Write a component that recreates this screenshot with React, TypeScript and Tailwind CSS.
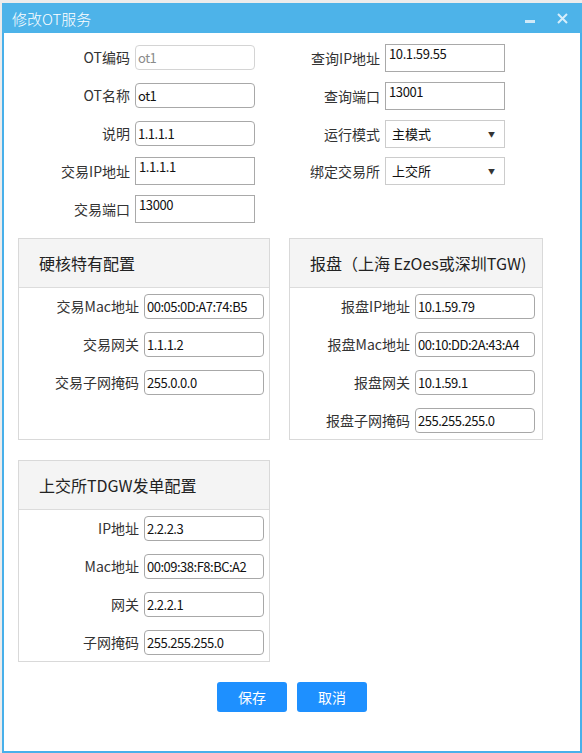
import React from "react";

type Kind = "round" | "square" | "select" | "disabled";

const FONT = { fontFamily: '"Noto Sans CJK SC", "Microsoft YaHei", sans-serif' };

function Box({ value, kind, w = "w-[120px]" }: { value: string; kind: Kind; w?: string }) {
  if (kind === "square") {
    return (
      <div className={`${w} h-[28px] border border-[#a9a9a9] bg-white pl-[3px] pt-[1px] text-[13px] tracking-[-0.4px] leading-[16px] text-[#111]`}>
        {value}
      </div>
    );
  }
  if (kind === "select") {
    return (
      <div className={`${w} h-[28px] border border-[#cccccc] bg-white pl-[6px] pr-[9px] flex items-center justify-between text-[13px] text-[#111]`}>
        <span>{value}</span>
        <span className="text-[7px] text-[#333]">▼</span>
      </div>
    );
  }
  const disabled = kind === "disabled";
  return (
    <div
      className={`${w} h-[25px] rounded-[4px] border bg-white pl-[2px] flex items-center text-[13px] tracking-[-0.5px] ${
        disabled ? "border-[#d4d4d4] text-[#8a8a8a]" : "border-[#a8a8a8] text-[#111]"
      }`}
    >
      {value}
    </div>
  );
}

function Row({ label, value, kind, lw }: { label: string; value: string; kind: Kind; lw: string }) {
  return (
    <div className="flex items-center">
      <div className={`${lw} pr-[5px] text-right text-[14px] text-[#333] whitespace-nowrap`}>{label}</div>
      <Box value={value} kind={kind} />
    </div>
  );
}

function Section({ title, rows, className = "" }: { title: string; rows: [string, string][]; className?: string }) {
  return (
    <div className={`border border-[#d9d9d9] bg-white flex flex-col ${className}`}>
      <div className="h-[49px] bg-[#f4f4f4] border-b border-[#dcdcdc] flex items-center pl-[20px] text-[16px] text-[#222] whitespace-nowrap">
        {title}
      </div>
      <div className="flex flex-col gap-[13px] pt-[6px] pb-[6px]">
        {rows.map(([l, v]) => (
          <Row key={l} label={l} value={v} kind="round" lw="w-[125px]" />
        ))}
      </div>
    </div>
  );
}

export default function App() {
  return (
    <div className="w-[582px] h-[753px] bg-[#ececec] pt-[3px] pl-[2px] overflow-hidden" style={FONT}>
      <div className="w-[580px] h-[750px] flex flex-col border-x-2 border-b-2 border-[#48b0ea] bg-white">
        <div className="h-[30px] -mx-[2px] bg-[#4db3e9] flex items-center justify-between pl-[10px] pr-[14px]">
          <span className="text-[15px] font-light text-white leading-none">修改OT服务</span>
          <div className="flex items-center gap-[22px]">
            <svg width="10" height="12" viewBox="0 0 10 12">
              <rect x="0" y="8" width="10" height="3" fill="#cfe9f8" />
            </svg>
            <svg width="11" height="11" viewBox="0 0 11 11">
              <path d="M1 1 L10 10 M10 1 L1 10" stroke="#d6eefb" strokeWidth="2" />
            </svg>
          </div>
        </div>

        <div className="flex pl-[14px]">
          <div className="w-[250px] flex flex-col pt-[12px]">
            <Row label="OT编码" value="ot1" kind="disabled" lw="w-[117px]" />
            <div className="h-[13px]" />
            <Row label="OT名称" value="ot1" kind="round" lw="w-[117px]" />
            <div className="h-[13px]" />
            <Row label="说明" value="1.1.1.1" kind="round" lw="w-[117px]" />
            <div className="h-[11px]" />
            <Row label="交易IP地址" value="1.1.1.1" kind="square" lw="w-[117px]" />
            <div className="h-[10px]" />
            <Row label="交易端口" value="13000" kind="square" lw="w-[117px]" />
          </div>
          <div className="flex flex-col pt-[11px] gap-[10px]">
            <Row label="查询IP地址" value="10.1.59.55" kind="square" lw="w-[117px]" />
            <Row label="查询端口" value="13001" kind="square" lw="w-[117px]" />
            <Row label="运行模式" value="主模式" kind="select" lw="w-[117px]" />
            <div className="-mt-[1px]">
              <Row label="绑定交易所" value="上交所" kind="select" lw="w-[117px]" />
            </div>
          </div>
        </div>

        <div className="flex items-stretch gap-[19px] pl-[14px] mt-[15px]">
          <Section
            className="w-[252px]"
            title="硬核特有配置"
            rows={[
              ["交易Mac地址", "00:05:0D:A7:74:B5"],
              ["交易网关", "1.1.1.2"],
              ["交易子网掩码", "255.0.0.0"],
            ]}
          />
          <Section
            className="w-[254px]"
            title="报盘（上海 EzOes或深圳TGW)"
            rows={[
              ["报盘IP地址", "10.1.59.79"],
              ["报盘Mac地址", "00:10:DD:2A:43:A4"],
              ["报盘网关", "10.1.59.1"],
              ["报盘子网掩码", "255.255.255.0"],
            ]}
          />
        </div>

        <div className="pl-[14px] mt-[20px]">
          <Section
            className="w-[252px]"
            title="上交所TDGW发单配置"
            rows={[
              ["IP地址", "2.2.2.3"],
              ["Mac地址", "00:09:38:F8:BC:A2"],
              ["网关", "2.2.2.1"],
              ["子网掩码", "255.255.255.0"],
            ]}
          />
        </div>

        <div className="flex justify-center gap-[10px] mt-[20px]">
          <button className="w-[70px] h-[30px] rounded-[3px] bg-[#1e90ff] text-white text-[14px]">保存</button>
          <button className="w-[70px] h-[30px] rounded-[3px] bg-[#1e90ff] text-white text-[14px]">取消</button>
        </div>
      </div>
    </div>
  );
}
